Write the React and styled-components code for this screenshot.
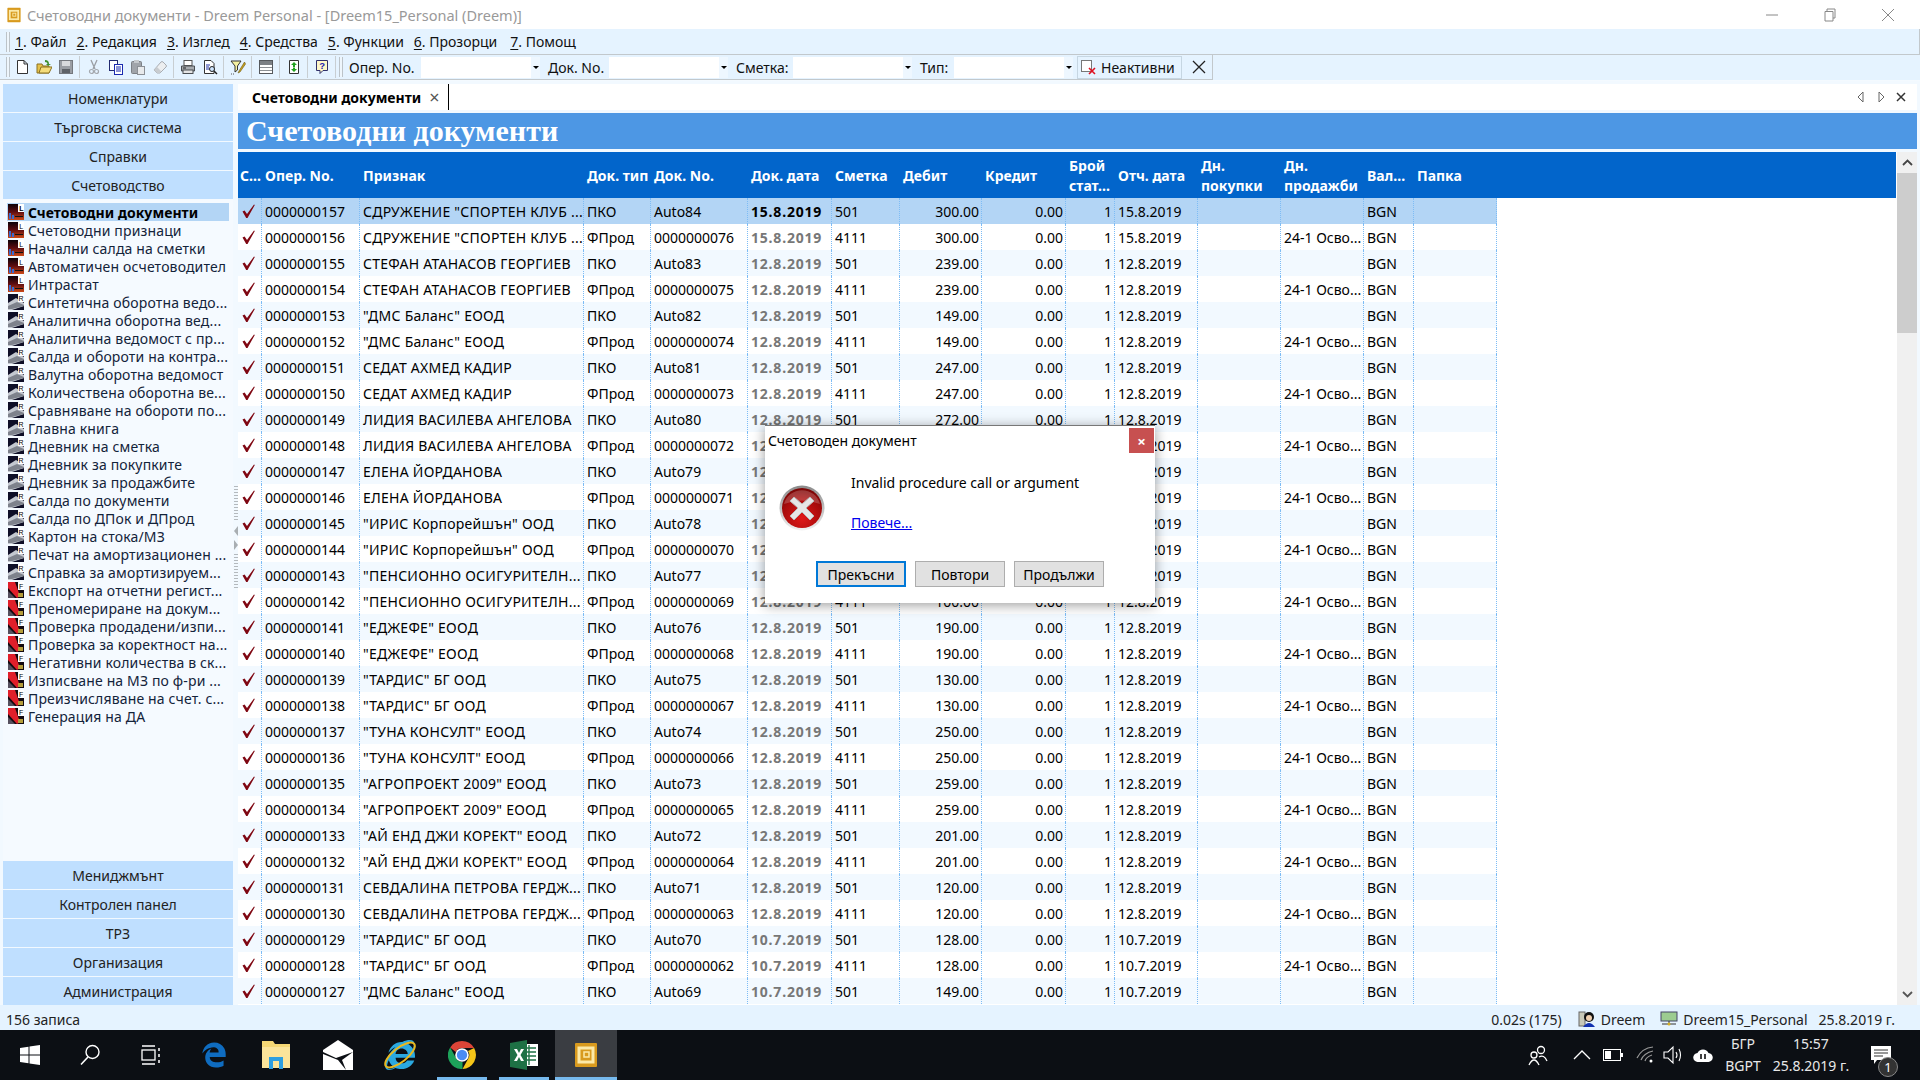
import React from "react";
import styled, { createGlobalStyle } from "styled-components";
import { FaEdgeLegacy, FaInternetExplorer } from "react-icons/fa";

const GlobalStyle = createGlobalStyle`
  html, body {
    margin: 0;
    padding: 0;
    background: #e5f3ff;
  }
  * {
    box-sizing: border-box;
  }
`;

const Page = styled.div`
  width: 1920px;
  height: 1080px;
  display: flex;
  flex-direction: column;
  overflow: hidden;
  position: relative;
  font-family: "Noto Sans", "Open Sans", sans-serif;
  font-size: 14px;
  color: #111;
  background: #e5f3ff;
`;

/* title bar */
const TitleBar = styled.div`
  height: 29px;
  flex: none;
  display: flex;
  align-items: center;
  background: #fff;
  padding-left: 5px;
  color: #999;
  font-size: 14.5px;
`;
const TitleText = styled.span`
  margin-left: 4px;
  flex: 1;
`;
const WinButton = styled.div`
  width: 58px;
  height: 29px;
  display: flex;
  align-items: center;
  justify-content: center;
`;
const WinButtons = styled.div`
  display: flex;
  margin-right: 3px;
`;

/* menu + toolbar */
const MenuBar = styled.div`
  height: 26px;
  flex: none;
  display: flex;
  align-items: center;
  gap: 10px;
  padding-left: 6px;
  background: #e5f3ff;
  border-bottom: 1px solid #c2c8cc;
  border-right: 1px solid #c2c8cc;
`;
const Grip = styled.div`
  width: 4px;
  height: 20px;
  margin-right: ${({ $after }) => $after}px;
  flex: none;
  border-left: 1px solid #bcc3c8;
  border-right: 1px solid #bcc3c8;
  background: #eef6fc;
`;
const MenuItem = styled.span`
  margin-left: ${({ $push }) => $push || 0}px;
  u {
    text-underline-offset: 2px;
  }
`;
const ToolRow = styled.div`
  height: 26px;
  flex: none;
  display: flex;
  background: #e5f3ff;
  border-bottom: 1px solid #f4faff;
`;
const Toolbar = styled.div`
  width: 1213px;
  display: flex;
  align-items: center;
  padding-left: 6px;
  border-bottom: 1px solid #c2c8cc;
  border-right: 1px solid #c2c8cc;
`;
const ToolButton = styled.div`
  width: 22px;
  height: 22px;
  flex: none;
  display: flex;
  align-items: center;
  justify-content: center;
`;
const ToolSep = styled.div`
  width: 1px;
  height: 22px;
  flex: none;
  margin: 0 3px 0 2px;
  background: #c8ced2;
`;
const FilterLabel = styled.div`
  width: ${({ $w }) => $w}px;
  flex: none;
  padding: 1px 0 0 1px;
  white-space: nowrap;
`;
const FilterBox = styled.div`
  display: flex;
  height: 21px;
  width: 119px;
  flex: none;
  margin-right: 7px;
  background: #fff;
`;
const FilterInput = styled.div`
  flex: 1;
`;
const FilterArrow = styled.div`
  width: 9px;
  background: #eef7ff;
  display: flex;
  align-items: center;
  justify-content: center;
  &::after {
    content: "";
    border-left: 3px solid transparent;
    border-right: 3px solid transparent;
    border-top: 3px solid #000;
  }
`;
const InactiveButton = styled.div`
  width: 105px;
  height: 23px;
  margin-left: -3px;
  flex: none;
  display: flex;
  align-items: center;
  gap: 5px;
  padding-left: 3px;
  border: 1px solid #c6d6e2;
  background: #e5f3ff;
`;
const ClearButton = styled.div`
  flex: 1;
  display: flex;
  justify-content: center;
  padding-left: 4px;
`;

/* body */
const Body = styled.div`
  flex: 1;
  min-height: 0;
  display: flex;
  padding: 3px 3px 0 3px;
  background: #f2f9ff;
`;
const Sidebar = styled.div`
  width: 230px;
  flex: none;
  display: flex;
  flex-direction: column;
  gap: 1px;
`;
const NavButton = styled.div`
  height: 28px;
  flex: none;
  display: flex;
  align-items: center;
  justify-content: center;
  background: #bfdfff;
  color: #222;
`;
const NavList = styled.div`
  flex: 1;
  margin: -1px 0;
  padding: 4px 4px 0;
  background: #f5faff;
`;
const NavRow = styled.div`
  height: 18px;
  display: flex;
  align-items: center;
  gap: 4px;
  padding-left: 1px;
  white-space: nowrap;
  letter-spacing: ${({ $active }) => ($active ? "0.05px" : "0.15px")};
  font-weight: ${({ $active }) => ($active ? 700 : 400)};
  background: ${({ $active }) => ($active ? "#b3d5f5" : "transparent")};
  color: ${({ $active }) => ($active ? "#000" : "#13233a")};
`;
const Splitter = styled.div`
  width: 5px;
  flex: none;
  display: flex;
  flex-direction: column;
  align-items: center;
  justify-content: center;
  gap: 4px;
  padding-bottom: 13px;
`;
const SplitterDash = styled.div`
  width: 4px;
  height: 36px;
  background: repeating-linear-gradient(#b4b9bd 0 1px, transparent 1px 3px);
`;
const SplitterArrow = styled.div`
  border-top: 5px solid transparent;
  border-bottom: 5px solid transparent;
  ${({ $right }) => ($right ? "border-left: 4px solid #a9aeb2;" : "border-right: 4px solid #a9aeb2;")}
`;

const Main = styled.div`
  flex: 1;
  min-width: 0;
  display: flex;
  flex-direction: column;
`;
const TabStrip = styled.div`
  height: 26px;
  flex: none;
  display: flex;
  align-items: stretch;
  padding-left: 7px;
  background: #fff;
`;
const Tab = styled.div`
  width: 204px;
  display: flex;
  align-items: center;
  gap: 8px;
  padding-left: 7px;
  font-weight: 700;
  color: #000;
  border-right: 1px solid #000;
`;
const TabClose = styled.span`
  color: #555;
  font-weight: 400;
  font-size: 18px;
`;
const TabTools = styled.div`
  margin-left: auto;
  display: flex;
  align-items: center;
  gap: 10px;
  padding-right: 11px;
`;
const DocTitle = styled.div`
  height: 36px;
  margin: 3px 0;
  flex: none;
  padding-left: 8px;
  background: #4d97e4;
  color: #fff;
  font-family: "Liberation Serif", serif;
  font-weight: 700;
  font-size: 30px;
  line-height: 36px;
  white-space: nowrap;
`;
const GridArea = styled.div`
  flex: 1;
  min-height: 0;
  display: flex;
  gap: 1px;
  background: #fff;
`;
const Table = styled.div`
  flex: 1;
  min-width: 0;
  background: #fff;
`;
const columns = "24px 98px 224px 67px 97px 84px 68px 82px 84px 49px 83px 83px 83px 50px 83px";
const HeadRow = styled.div`
  display: grid;
  grid-template-columns: ${columns};
  height: 46px;
  padding-top: 1px;
  align-items: center;
  background: #0265cb;
  color: #fff;
  font-weight: 700;
  line-height: 20px;
`;
const HeadCell = styled.div`
  padding-left: ${({ $tight }) => ($tight ? 2 : 3)}px;
  white-space: pre-line;
`;
const DataRow = styled.div`
  display: grid;
  grid-template-columns: ${columns};
  width: 1259px;
  height: 26px;
  background: ${({ $tone }) => $tone};
  color: #000;
`;
const Cell = styled.div`
  display: flex;
  align-items: center;
  justify-content: ${({ $right }) => ($right ? "flex-end" : "flex-start")};
  padding: ${({ $right }) => ($right ? "0 2px 0 0" : "0 0 0 3px")};
  overflow: hidden;
  white-space: nowrap;
  border-right: 1px dotted #7dbcf5;
  letter-spacing: ${({ $spread }) => $spread || 0}px;
  font-weight: ${({ $date }) => ($date ? 700 : 400)};
  color: ${({ $date }) => $date || "inherit"};
`;
const ScrollBar = styled.div`
  width: 20px;
  flex: none;
  display: flex;
  flex-direction: column;
  background: #f0f0f0;
`;
const ScrollArrow = styled.div`
  height: 21px;
  flex: none;
  display: flex;
  align-items: center;
  justify-content: center;
  margin-top: ${({ $end }) => ($end ? "auto" : "0")};
`;
const ScrollThumb = styled.div`
  height: 160px;
  flex: none;
  background: #cdcdcd;
`;

/* status + taskbar */
const StatusBar = styled.div`
  height: 25px;
  flex: none;
  display: flex;
  align-items: center;
  padding: 3px 0 0 6px;
  background: #e5f3ff;
  color: #222;
`;
const StatusItem = styled.div`
  display: flex;
  align-items: center;
  gap: 5px;
  margin-left: ${({ $gap }) => $gap}px;
  white-space: nowrap;
`;
const Taskbar = styled.div`
  height: 50px;
  flex: none;
  display: flex;
  align-items: stretch;
  background: #0c0f14;
  color: #e8e8e8;
`;
const TaskSlot = styled.div`
  width: ${({ $w }) => $w || 62}px;
  flex: none;
  position: relative;
  display: flex;
  align-items: center;
  justify-content: center;
  background: ${({ $active }) => ($active ? "#3a3d42" : "transparent")};
  &::after {
    content: "";
    display: ${({ $open }) => ($open ? "block" : "none")};
    position: absolute;
    left: ${({ $active }) => ($active ? 0 : 6)}px;
    right: ${({ $active }) => ($active ? 0 : 6)}px;
    bottom: 0;
    height: 3px;
    background: #76b9ed;
  }
`;
const Tray = styled.div`
  margin-left: auto;
  display: flex;
  align-items: center;
`;
const TrayIcon = styled.div`
  width: ${({ $w }) => $w}px;
  display: flex;
  justify-content: center;
`;
const TrayClock = styled.div`
  width: ${({ $w }) => $w}px;
  flex: none;
  text-align: center;
  line-height: 22px;
  font-size: 14px;
`;
const Notify = styled.div`
  width: 62px;
  position: relative;
  display: flex;
  justify-content: center;
  padding-right: 16px;
  margin-left: 4px;
`;
const NotifyBadge = styled.span`
  position: absolute;
  top: 11px;
  left: 20px;
  width: 20px;
  height: 20px;
  border-radius: 50%;
  background: #333;
  border: 1px solid #888;
  color: #fff;
  font-size: 13px;
  line-height: 18px;
  text-align: center;
`;

/* dialog over the grid */
const Dialog = styled.div`
  position: absolute;
  left: 765px;
  top: 425px;
  width: 390px;
  height: 178px;
  background: #fff;
  border-top: 1px solid #777;
  box-shadow: 0 2px 12px rgba(0, 0, 0, 0.4);
`;
const DialogTitle = styled.div`
  height: 31px;
  padding: 5px 0 0 3px;
  color: #000;
`;
const DialogClose = styled.div`
  position: absolute;
  top: 2px;
  right: 1px;
  width: 25px;
  height: 25px;
  background: #c75050;
  color: #fff;
  display: flex;
  align-items: center;
  justify-content: center;
  font-size: 15px;
  font-weight: 700;
`;
const DialogBody = styled.div`
  display: flex;
  height: 104px;
  padding-left: 14px;
`;
const DialogIcon = styled.div`
  width: 72px;
  padding-top: 28px;
  flex: none;
`;
const DialogText = styled.div`
  padding-top: 16px;
  color: #000;
`;
const DialogLink = styled.a`
  display: block;
  margin-top: 21px;
  color: #0000ee;
  text-decoration: underline;
`;
const DialogButtons = styled.div`
  display: flex;
  gap: 9px;
  padding-left: 51px;
`;
const DialogButton = styled.div`
  width: 90px;
  height: 26px;
  display: flex;
  align-items: center;
  justify-content: center;
  background: #e1e1e1;
  color: #000;
  border: ${({ $primary }) => ($primary ? "2px solid #0078d7" : "1px solid #adadad")};
`;

const Svg = ({ size = 16, w, h, children }) => (
  <svg width={w || size} height={h || size} viewBox={`0 0 ${w || size} ${h || size}`}>
    {children}
  </svg>
);

const NavIcon = ({ kind }) => {
  if (kind === "L") {
    return (
      <Svg>
        <defs>
          <linearGradient id="navL" x1="0" y1="0" x2="0" y2="1">
            <stop offset="0" stopColor="#0c0208" />
            <stop offset="0.5" stopColor="#5e0c10" />
            <stop offset="1" stopColor="#cc4a18" />
          </linearGradient>
        </defs>
        <rect width="16" height="16" fill="url(#navL)" />
        <rect x="1" y="9" width="2" height="6" fill="#3a6ad0" />
        <rect x="4" y="11" width="2" height="4" fill="#3a6ad0" />
        <rect x="7" y="12" width="8" height="1" fill="#111" />
        <rect x="10" y="0" width="6" height="8" fill="#fff" />
        <text x="11.2" y="7" fontSize="7" fill="#000" fontFamily="Liberation Sans">L</text>
      </Svg>
    );
  }
  if (kind === "R") {
    return (
      <Svg>
        <rect width="16" height="16" fill="#0e0e26" />
        <path d="M0 9 L8 4 L16 9 L16 12 L4 16 L0 16 Z" fill="#c4c8d0" />
        <path d="M0 12 L9 8 L16 11 L16 12 L4 15 L0 15 Z" fill="#7e828c" />
        <rect x="10" y="0" width="6" height="8" fill="#fff" />
        <text x="10.6" y="7" fontSize="7" fill="#000" fontFamily="Liberation Sans">R</text>
      </Svg>
    );
  }
  return (
    <Svg>
      <rect width="16" height="16" fill="#120a10" />
      <path d="M0 0 L7 0 L12 14 L9 16 L0 6 Z" fill="#e01f2a" />
      <path d="M0 9 L7 16 L0 16 Z" fill="#55505e" />
      <rect x="10" y="11" width="5" height="4" fill="#b59d3a" />
      <rect x="10" y="0" width="6" height="8" fill="#fff" />
      <text x="11" y="7" fontSize="7" fill="#000" fontFamily="Liberation Sans">F</text>
    </Svg>
  );
};

const CheckMark = () => (
  <svg width="16" height="16" viewBox="0 0 16 16">
    <path d="M1.5 8.5 L3.6 7.5 L6 11 L13 1.5 L13.8 2 L6.5 15 L5.2 15 Z" fill="#7f0712" />
  </svg>
);

const ErrorIcon = () => (
  <svg width="46" height="46" viewBox="0 0 46 46">
    <defs>
      <radialGradient id="errFill" cx="0.5" cy="0.75" r="0.7">
        <stop offset="0" stopColor="#e01818" />
        <stop offset="0.7" stopColor="#a80c0c" />
        <stop offset="1" stopColor="#7d0606" />
      </radialGradient>
      <linearGradient id="errRing" x1="0" y1="0" x2="0" y2="1">
        <stop offset="0" stopColor="#8a8a8a" />
        <stop offset="1" stopColor="#f2f2f2" />
      </linearGradient>
    </defs>
    <circle cx="23" cy="23" r="22.5" fill="url(#errRing)" />
    <circle cx="23" cy="23" r="20" fill="url(#errFill)" />
    <path d="M5 19 A18.5 18 0 0 1 41 19 Q23 12 5 19 Z" fill="#fff" opacity="0.2" />
    <path d="M15 12 L23 19 L31 12 L35 16 L27 23 L35 31 L31 35 L23 27 L15 35 L11 31 L19 23 L11 16 Z" fill="#e6e6e6" stroke="#b8b8b8" />
  </svg>
);

const ToolIcon = ({ name }) => {
  switch (name) {
    case "new":
      return <Svg><path d="M3.5 1.5 H10 L13.5 5 V14.5 H3.5 Z M10 1.5 V5 H13.5" fill="#fff" stroke="#333" /></Svg>;
    case "open":
      return <Svg><path d="M1 5 H6 L7 7 H13 V14 H1 Z" fill="#e6c24a" stroke="#8a7020" /><path d="M3 14 L5 8 H16 L13 14 Z" fill="#f4dc7a" stroke="#8a7020" /><path d="M9 1 Q13 1 13 5 L15 5 L12 7 L10 5 L11.5 5 Q11.5 3 9 3 Z" fill="#3f8f2f" /></Svg>;
    case "save":
      return <Svg><rect x="1.5" y="1.5" width="13" height="13" fill="#9a9ea4" stroke="#74787e" /><rect x="4" y="2" width="8" height="5" fill="#d8dadd" /><rect x="4" y="10" width="8" height="4" fill="#5e6268" /></Svg>;
    case "cut":
      return <Svg><path d="M5 1 L9 10 M11 1 L7 10" stroke="#9a9ea4" strokeWidth="1.3" fill="none" /><circle cx="5.5" cy="12.5" r="2" fill="none" stroke="#a4a8ae" strokeWidth="1.2" /><circle cx="10.5" cy="12.5" r="2" fill="none" stroke="#a4a8ae" strokeWidth="1.2" /></Svg>;
    case "copy":
      return <Svg><rect x="1.5" y="1.5" width="8" height="10" fill="#fff" stroke="#222a70" /><rect x="6.5" y="5.5" width="8" height="10" fill="#fff" stroke="#1a2ab0" /><path d="M8 8 H13 M8 10 H13 M8 12 H13" stroke="#1a2ab0" /></Svg>;
    case "paste":
      return <Svg><rect x="1.5" y="2.5" width="10" height="12" rx="1" fill="#a0a4aa" stroke="#7c8086" /><rect x="4" y="1" width="5" height="3" fill="#c4c8cc" /><rect x="7.5" y="7.5" width="7" height="8" fill="#e8eaec" stroke="#8c9096" /></Svg>;
    case "erase":
      return <Svg><path d="M2 11 L9 3 Q10 2 11 3 L14 6 Q15 7 14 8 L8 14 H5 Z" fill="#eceef0" stroke="#a8acb2" /><path d="M2 11 L5 8 L9 12 L8 14 H5 Z" fill="#c8ccd0" /></Svg>;
    case "print":
      return <Svg><rect x="4" y="1.5" width="8" height="5" fill="#fff" stroke="#555" /><path d="M1.5 7 H14.5 V12 H1.5 Z" fill="#a8acb0" stroke="#4a4e52" /><rect x="3" y="11" width="10" height="3.5" fill="#e4e4e4" stroke="#4a4e52" /><path d="M3 9 H6" stroke="#222" /></Svg>;
    case "preview":
      return <Svg><path d="M2.5 1.5 H9 L12 4.5 V14.5 H2.5 Z" fill="#fff" stroke="#333" /><path d="M4 6 H8 M4 8 H7 M4 10 H7" stroke="#2030a0" /><circle cx="10" cy="10" r="2.5" fill="#cfe6ff" stroke="#222" /><path d="M12 12 L15 15" stroke="#222" strokeWidth="1.5" /></Svg>;
    case "filter":
      return <Svg><path d="M1 2 H11 L7.5 7 V11 L5 13 V7 Z" fill="#f4f0a0" stroke="#333" /><path d="M14.5 3 L9 12 L8 14 L10 13 L15.5 5 Z" fill="#c8a020" stroke="#6b5a10" strokeWidth="0.6" /><path d="M1 15 H4" stroke="#555" strokeDasharray="1 1" /></Svg>;
    case "list":
      return <Svg><rect x="1.5" y="1.5" width="13" height="13" fill="#fff" stroke="#55585c" /><rect x="2" y="2" width="12" height="4" fill="#7c8084" /><path d="M2 8.5 H14 M2 11.5 H14" stroke="#8c9094" /></Svg>;
    case "refresh":
      return <Svg><path d="M3.5 1.5 H12.5 V14.5 H3.5 Z" fill="#fff" stroke="#333" /><path d="M8 3 L11 6 H9 V8 H7 V6 H5 Z" fill="#22a020" /><path d="M8 13 L5 10 H7 V8.5 H9 V10 H11 Z" fill="#22a020" /></Svg>;
    default:
      return <Svg><path d="M2.5 1.5 H13.5 V11.5 H9 L6 14.5 V11.5 H2.5 Z" fill="#fdf7c8" stroke="#30306a" /><text x="5.2" y="10" fontSize="9.5" fontWeight="700" fill="#2020b0" fontFamily="Liberation Sans">?</text></Svg>;
  }
};

const WindowsLogo = () => (
  <svg width="20" height="20" viewBox="0 0 20 20">
    <path d="M0 3 L8.5 1.8 V9.5 H0 Z M9.5 1.6 L20 0 V9.5 H9.5 Z M0 10.5 H8.5 V18.2 L0 17 Z M9.5 10.5 H20 V20 L9.5 18.4 Z" fill="#fff" />
  </svg>
);
const SearchGlyph = () => (
  <svg width="22" height="22" viewBox="0 0 22 22">
    <circle cx="13.5" cy="8" r="6.5" fill="none" stroke="#fff" strokeWidth="1.4" />
    <path d="M9 13 L2 20.5" stroke="#fff" strokeWidth="1.6" />
  </svg>
);
const TaskViewGlyph = () => (
  <svg width="22" height="24" viewBox="0 0 22 24">
    <rect x="2" y="7" width="13" height="10" fill="none" stroke="#fff" strokeWidth="1.3" />
    <path d="M2 3 H15 M2 21 H15 M19 5 V8 M19 11 V14 M19 17 V20" stroke="#fff" strokeWidth="1.5" />
  </svg>
);
const FolderGlyph = () => (
  <svg width="28" height="30" viewBox="0 0 28 30">
    <path d="M0 1 H11 L13 4 H28 V28 H0 Z" fill="#f5d774" />
    <rect x="0" y="7" width="28" height="21" fill="#fbe49a" />
    <path d="M7 29 V17 H21 V29 H17 V21 H11 V29 Z" fill="#2d9fe0" />
  </svg>
);
const MailGlyph = () => (
  <svg width="30" height="30" viewBox="0 0 30 30">
    <path d="M0 10 L15 0 L30 10 V30 H0 Z" fill="#fff" />
    <path d="M0 12 L13 18 L30 12 L19 20 L23 30 L15 20 L0 14 Z" fill="#0c0f14" />
  </svg>
);
const IeGlyph = () => (
  <IeWrap>
    <FaInternetExplorer size={30} color="#2aa8e0" />
    <IeRing width="36" height="36" viewBox="0 0 36 36">
      <ellipse cx="18" cy="18" rx="18" ry="7" transform="rotate(-38 18 18)" fill="none" stroke="#e8b820" strokeWidth="2" />
    </IeRing>
  </IeWrap>
);
const IeWrap = styled.div`
  position: relative;
  display: flex;
`;
const IeRing = styled.svg`
  position: absolute;
  left: -3px;
  top: -3px;
`;
const ChromeGlyph = () => (
  <svg width="28" height="28" viewBox="0 0 28 28">
    <path d="M14 0 A14 14 0 0 1 26.1 7 H14 A7 7 0 0 0 7.7 11 L2.2 6.4 A14 14 0 0 1 14 0 Z" fill="#dc4437" />
    <path d="M26.1 7 A14 14 0 0 1 14.5 28 L20 18 A7 7 0 0 0 20 10 Z" fill="#f5c518" />
    <path d="M2.2 6.4 L8 17 A7 7 0 0 0 14.5 21 L14.5 28 A14 14 0 0 1 2.2 6.4 Z" fill="#1da25a" />
    <circle cx="14" cy="14" r="6.8" fill="#fff" />
    <circle cx="14" cy="14" r="5.2" fill="#4a8bf5" />
  </svg>
);
const ExcelGlyph = () => (
  <svg width="28" height="30" viewBox="0 0 28 30">
    <rect x="10" y="4" width="18" height="22" fill="#fff" />
    <path d="M14 8 H26 M14 12 H26 M14 16 H26 M14 20 H26 M19 5 V25" stroke="#1e7145" strokeWidth="1.4" />
    <path d="M0 3 L17 0 V30 L0 27 Z" fill="#1e7145" />
    <path d="M4 9 H7 L9 13 L11 9 H14 L10.5 15 L14 21 H11 L9 17 L7 21 H4 L7.5 15 Z" fill="#fff" />
  </svg>
);
const AppGlyph = ({ size = 30 }) => (
  <svg width={size} height={size} viewBox="0 0 30 30">
    <rect x="4" y="3" width="22" height="24" rx="1" fill="#d89a1e" />
    <rect x="8" y="8" width="14" height="14" fill="none" stroke="#fbe9a8" strokeWidth="3" />
    <rect x="13" y="12" width="5" height="5" fill="none" stroke="#fbe9a8" strokeWidth="1.5" />
  </svg>
);

const Tri = ({ dir = "up", stroke = "#555" }) => (
  <svg width="11" height="7" viewBox="0 0 11 7">
    <path d={dir === "up" ? "M1 6 L5.5 1.5 L10 6" : "M1 1 L5.5 5.5 L10 1"} fill="none" stroke={stroke} strokeWidth="1.8" />
  </svg>
);

const topNav = ["Номенклатури", "Търговска система", "Справки", "Счетоводство"];
const bottomNav = ["Мениджмънт", "Контролен панел", "ТРЗ", "Организация", "Администрация"];
const navItems = [
  ["L", "Счетоводни документи"],
  ["L", "Счетоводни признаци"],
  ["L", "Начални салда на сметки"],
  ["L", "Автоматичен осчетоводител"],
  ["L", "Интрастат"],
  ["R", "Синтетична оборотна ведо..."],
  ["R", "Аналитична оборотна вед..."],
  ["R", "Аналитична ведомост с пр..."],
  ["R", "Салда и обороти на контра..."],
  ["R", "Валутна оборотна ведомост"],
  ["R", "Количествена оборотна ве..."],
  ["R", "Сравняване на обороти по..."],
  ["R", "Главна книга"],
  ["R", "Дневник на сметка"],
  ["R", "Дневник за покупките"],
  ["R", "Дневник за продажбите"],
  ["R", "Салда по документи"],
  ["R", "Салда по ДПок и ДПрод"],
  ["R", "Картон на стока/МЗ"],
  ["R", "Печат на амортизационен ..."],
  ["R", "Справка за амортизируем..."],
  ["F", "Експорт на отчетни регист..."],
  ["F", "Преномериране на докум..."],
  ["F", "Проверка продадени/изпи..."],
  ["F", "Проверка за коректност на..."],
  ["F", "Негативни количества в ск..."],
  ["F", "Изписване на МЗ по ф-ри ..."],
  ["F", "Преизчисляване на счет. с..."],
  ["F", "Генерация на ДА"],
];

const headers = [
  "С...", "Опер. No.", "Признак", "Док. тип", "Док. No.", "Док. дата", "Сметка", "Дебит", "Кредит",
  "Брой\nстат...", "Отч. дата", "Дн.\nпокупки", "Дн.\nпродажби", "Вал...", "Папка",
];

const deals = [
  ['СДРУЖЕНИЕ "СПОРТЕН КЛУБ ...', 84, 76, "15.8.2019", "300.00"],
  ["СТЕФАН АТАНАСОВ ГЕОРГИЕВ", 83, 75, "12.8.2019", "239.00"],
  ['"ДМС Баланс" ЕООД', 82, 74, "12.8.2019", "149.00"],
  ["СЕДАТ АХМЕД КАДИР", 81, 73, "12.8.2019", "247.00"],
  ["ЛИДИЯ ВАСИЛЕВА АНГЕЛОВА", 80, 72, "12.8.2019", "272.00"],
  ["ЕЛЕНА ЙОРДАНОВА", 79, 71, "12.8.2019", "100.00"],
  ['"ИРИС Корпорейшън" ООД', 78, 70, "12.8.2019", "100.00"],
  ['"ПЕНСИОННО ОСИГУРИТЕЛН...', 77, 69, "12.8.2019", "100.00"],
  ['"ЕДЖЕФЕ" ЕООД', 76, 68, "12.8.2019", "190.00"],
  ['"ТАРДИС" БГ ООД', 75, 67, "12.8.2019", "130.00"],
  ['"ТУНА КОНСУЛТ" ЕООД', 74, 66, "12.8.2019", "250.00"],
  ['"АГРОПРОЕКТ 2009" ЕООД', 73, 65, "12.8.2019", "259.00"],
  ['"АЙ ЕНД ДЖИ КОРЕКТ" ЕООД', 72, 64, "12.8.2019", "201.00"],
  ["СЕВДАЛИНА ПЕТРОВА ГЕРДЖ...", 71, 63, "12.8.2019", "120.00"],
  ['"ТАРДИС" БГ ООД', 70, 62, "10.7.2019", "128.00"],
  ['"ДМС Баланс" ЕООД', 69, 61, "10.7.2019", "149.00"],
];

const rows = deals
  .flatMap(([name, auto, doc, date, amount]) => [
    { name, type: "ПКО", docNo: `Auto${auto}`, date, account: "501", amount, sales: "" },
    { name, type: "ФПрод", docNo: `00000000${doc}`, date, account: "4111", amount, sales: "24-1 Осво..." },
  ])
  .slice(0, 31)
  .map((row, i) => ({ ...row, oper: `0000000${157 - i}` }));

const rowTone = (i) => (i === 0 ? "#b3d5f5" : i % 2 ? "#fff" : "#f2f9ff");

const tools = [
  ["new", "open", "save"],
  ["cut", "copy", "paste", "erase"],
  ["print", "preview"],
  ["filter"],
  ["list"],
  ["refresh"],
  ["help"],
];
const filters = [
  ["Опер. No.", 73],
  ["Док. No.", 62],
  ["Сметка:", 58],
  ["Тип:", 35],
];
const menu = ["Файл", "Редакция", "Изглед", "Средства", "Функции", "Прозорци", "Помощ"];

export default function App() {
  return (
    <Page>
      <GlobalStyle />
      <TitleBar>
        <AppGlyph size={18} />
        <TitleText>Счетоводни документи - Dreem Personal - [Dreem15_Personal (Dreem)]</TitleText>
        <WinButtons>
          <WinButton>
            <svg width="12" height="12" viewBox="0 0 12 12"><path d="M0 6 H12" stroke="#888" /></svg>
          </WinButton>
          <WinButton>
            <svg width="12" height="14" viewBox="0 0 12 14"><path d="M3 3 V1 H11 V10 H9 M1 3.5 H9 V13 H1 Z" fill="none" stroke="#888" /></svg>
          </WinButton>
          <WinButton>
            <svg width="14" height="14" viewBox="0 0 14 14"><path d="M1 1 L13 13 M13 1 L1 13" stroke="#888" /></svg>
          </WinButton>
        </WinButtons>
      </TitleBar>

      <MenuBar>
        <Grip $after={-5} />
        {menu.map((label, i) => (
          <MenuItem key={label} $push={i === 6 ? 3 : 0}>
            <u>{i + 1}</u>. {label}
          </MenuItem>
        ))}
      </MenuBar>

      <ToolRow>
        <Toolbar>
          <Grip $after={1} />
          {tools.map((group, g) => (
            <React.Fragment key={g}>
              {group.map((name) => (
                <ToolButton key={name}>
                  <ToolIcon name={name} />
                </ToolButton>
              ))}
              <ToolSep />
            </React.Fragment>
          ))}
          <Grip $after={5} />
          {filters.map(([label, w]) => (
            <React.Fragment key={label}>
              <FilterLabel $w={w}>{label}</FilterLabel>
              <FilterBox>
                <FilterInput />
                <FilterArrow />
              </FilterBox>
            </React.Fragment>
          ))}
          <InactiveButton>
            <svg width="15" height="15" viewBox="0 0 15 15">
              <rect x="0.5" y="0.5" width="10" height="11" fill="#fff" stroke="#777" />
              <path d="M8 8 L14 14 M14 8 L8 14" stroke="#e01020" strokeWidth="1.6" />
            </svg>
            Неактивни
          </InactiveButton>
          <ClearButton>
            <svg width="14" height="14" viewBox="0 0 14 14"><path d="M1 1 L13 13 M13 1 L1 13" stroke="#222" strokeWidth="1.3" /></svg>
          </ClearButton>
        </Toolbar>
      </ToolRow>

      <Body>
        <Sidebar>
          {topNav.map((label) => <NavButton key={label}>{label}</NavButton>)}
          <NavList>
            {navItems.map(([kind, label], i) => (
              <NavRow key={label} $active={i === 0}>
                <NavIcon kind={kind} />
                {label}
              </NavRow>
            ))}
          </NavList>
          {bottomNav.map((label) => <NavButton key={label}>{label}</NavButton>)}
        </Sidebar>

        <Splitter>
          <SplitterDash />
          <SplitterArrow />
          <SplitterArrow $right />
          <SplitterDash />
        </Splitter>

        <Main>
          <TabStrip>
            <Tab>
              Счетоводни документи
              <TabClose>×</TabClose>
            </Tab>
            <TabTools>
              <svg width="10" height="12" viewBox="0 0 10 12"><path d="M7 1 L2 6 L7 11 Z" fill="#fff" stroke="#666" /></svg>
              <svg width="10" height="12" viewBox="0 0 10 12"><path d="M3 1 L8 6 L3 11 Z" fill="#fff" stroke="#666" /></svg>
              <svg width="10" height="10" viewBox="0 0 10 10"><path d="M1 1 L9 9 M9 1 L1 9" stroke="#333" strokeWidth="1.5" /></svg>
            </TabTools>
          </TabStrip>
          <DocTitle>Счетоводни документи</DocTitle>
          <GridArea>
            <Table>
              <HeadRow>
                {headers.map((h, i) => <HeadCell key={h} $tight={i === 0}>{h}</HeadCell>)}
              </HeadRow>
              {rows.map((row, i) => (
                <DataRow key={row.oper} $tone={rowTone(i)}>
                  <Cell><CheckMark /></Cell>
                  <Cell>{row.oper}</Cell>
                  <Cell $spread={0.25}>{row.name}</Cell>
                  <Cell>{row.type}</Cell>
                  <Cell>{row.docNo}</Cell>
                  <Cell $date={i === 0 ? "#000" : "#777"} $spread={0.8}>{row.date}</Cell>
                  <Cell>{row.account}</Cell>
                  <Cell $right>{row.amount}</Cell>
                  <Cell $right>0.00</Cell>
                  <Cell $right>1</Cell>
                  <Cell>{row.date}</Cell>
                  <Cell />
                  <Cell>{row.sales}</Cell>
                  <Cell>BGN</Cell>
                  <Cell />
                </DataRow>
              ))}
            </Table>
            <ScrollBar>
              <ScrollArrow><Tri dir="up" stroke="#444" /></ScrollArrow>
              <ScrollThumb />
              <ScrollArrow $end><Tri dir="down" stroke="#555" /></ScrollArrow>
            </ScrollBar>
          </GridArea>
        </Main>
      </Body>

      <StatusBar>
        <span>156 записа</span>
        <StatusItem $gap={1411}>0.02s (175)</StatusItem>
        <StatusItem $gap={16}>
          <svg width="18" height="18" viewBox="0 0 18 18">
            <rect x="1" y="2" width="6" height="14" fill="#c8c8b8" stroke="#666" />
            <circle cx="11" cy="7" r="5" fill="#111" />
            <circle cx="11" cy="8" r="3" fill="#f0d0b0" />
            <path d="M5 17 Q11 9 17 17 Z" fill="#1030b0" />
          </svg>
          Dreem
        </StatusItem>
        <StatusItem $gap={15}>
          <svg width="18" height="16" viewBox="0 0 18 16">
            <rect x="1" y="1" width="16" height="9" fill="#9ccc90" stroke="#446" />
            <path d="M9 10 V13 M2 13 H16" stroke="#333" />
            <circle cx="9" cy="13" r="1.5" fill="#d8b020" />
          </svg>
          Dreem15_Personal
        </StatusItem>
        <StatusItem $gap={11}>25.8.2019 г.</StatusItem>
      </StatusBar>

      <Taskbar>
        <TaskSlot $w={60}><WindowsLogo /></TaskSlot>
        <TaskSlot $w={59}><SearchGlyph /></TaskSlot>
        <TaskSlot $w={64}><TaskViewGlyph /></TaskSlot>
        <TaskSlot><FaEdgeLegacy size={26} color="#0f6cc0" /></TaskSlot>
        <TaskSlot><FolderGlyph /></TaskSlot>
        <TaskSlot><MailGlyph /></TaskSlot>
        <TaskSlot><IeGlyph /></TaskSlot>
        <TaskSlot $open><ChromeGlyph /></TaskSlot>
        <TaskSlot $open><ExcelGlyph /></TaskSlot>
        <TaskSlot $open $active><AppGlyph /></TaskSlot>
        <Tray>
          <TrayIcon $w={64}>
            <svg width="20" height="22" viewBox="0 0 20 22" fill="none" stroke="#fff" strokeWidth="1.3">
              <circle cx="13" cy="6" r="3.5" /><circle cx="6" cy="11" r="3" /><path d="M1 21 Q6 11 11 21 M11 13 Q16 10 19 17" />
            </svg>
          </TrayIcon>
          <TrayIcon $w={24}><svg width="18" height="10" viewBox="0 0 18 10"><path d="M1 9 L9 1 L17 9" fill="none" stroke="#fff" strokeWidth="1.3" /></svg></TrayIcon>
          <TrayIcon $w={38}>
            <svg width="20" height="12" viewBox="0 0 20 12"><rect x="0.5" y="0.5" width="17" height="11" fill="none" stroke="#fff" /><rect x="2" y="2" width="6" height="8" fill="#fff" /><rect x="18" y="4" width="2" height="4" fill="#fff" /></svg>
          </TrayIcon>
          <TrayIcon $w={26}>
            <svg width="18" height="18" viewBox="0 0 18 18" fill="none" stroke="#999" strokeWidth="1.2"><path d="M1 12 Q6 2 17 1 M5 14 Q8 7 17 5 M9 15 Q10 11 16 9" /><circle cx="15" cy="15" r="1.5" fill="#fff" stroke="none" /></svg>
          </TrayIcon>
          <TrayIcon $w={30}>
            <svg width="20" height="20" viewBox="0 0 20 20" fill="none" stroke="#fff" strokeWidth="1.1"><path d="M1 7 H5 L10 2 V18 L5 13 H1 Z M13 7 Q15 10 13 13 M16 4 Q19 10 16 16" /></svg>
          </TrayIcon>
          <TrayIcon $w={30}>
            <svg width="20" height="14" viewBox="0 0 20 14"><path d="M5 14 A4.5 4.5 0 0 1 4.5 5 A6 6 0 0 1 15.5 5 A4.5 4.5 0 0 1 15 14 Z" fill="#fff" /><path d="M8 6 V11 M12 6 V11" stroke="#111" strokeWidth="1.6" /></svg>
          </TrayIcon>
          <TrayClock $w={50}>БГР<br />BGPT</TrayClock>
          <TrayClock $w={86}>15:57<br />25.8.2019 г.</TrayClock>
          <Notify>
            <svg width="20" height="18" viewBox="0 0 20 18"><path d="M0 0 H20 V14 H6 L3 18 V14 H0 Z" fill="#fff" /><path d="M3 4 H17 M3 7 H17 M3 10 H12" stroke="#333" /></svg>
            <NotifyBadge>1</NotifyBadge>
          </Notify>
        </Tray>
      </Taskbar>

      <Dialog>
        <DialogTitle>Счетоводен документ</DialogTitle>
        <DialogClose>×</DialogClose>
        <DialogBody>
          <DialogIcon><ErrorIcon /></DialogIcon>
          <DialogText>
            Invalid procedure call or argument
            <DialogLink href="#">Повече...</DialogLink>
          </DialogText>
        </DialogBody>
        <DialogButtons>
          <DialogButton $primary>Прекъсни</DialogButton>
          <DialogButton>Повтори</DialogButton>
          <DialogButton>Продължи</DialogButton>
        </DialogButtons>
      </Dialog>
    </Page>
  );
}
